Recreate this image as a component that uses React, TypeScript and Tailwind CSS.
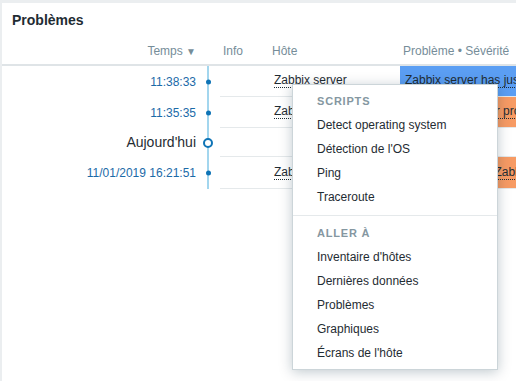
import React from 'react';

type Row = {
  time: string;
  today?: boolean;
  host?: string;
  problem?: string;
  color?: string;
  h: string;
};

const rows: Row[] = [
  { time: '11:38:33', host: 'Zabbix server', problem: 'Zabbix server has just been restarted', color: 'bg-[#5b9ef3]', h: 'h-[31px]' },
  { time: '11:35:35', host: 'Zabbix server', problem: 'Zabbix discoverer processes more than 75% busy', color: 'bg-[#f79b64]', h: 'h-[31px]' },
  { time: "Aujourd'hui", today: true, h: 'h-[29px]' },
  { time: '11/01/2019 16:21:51', host: 'Zabbix server', problem: 'Zabbix agent on Zabbix server is unreachable for 5 minutes', color: 'bg-[#f79b64]', h: 'h-[32px]' },
];

const scripts = ['Detect operating system', "Détection de l'OS", 'Ping', 'Traceroute'];
const goTo = ["Inventaire d'hôtes", 'Dernières données', 'Problèmes', 'Graphiques', "Écrans de l'hôte"];

function MenuSection({ title, items, pad }: { title: string; items: string[]; pad: string }) {
  return (
    <div className={pad}>
      <div className="h-6 flex items-center pl-[24px] text-[11px] font-bold tracking-[0.8px] text-[#8597a1]">{title}</div>
      {items.map((it) => (
        <div key={it} className="h-6 flex items-center pl-[24px] text-[12px] text-[#1f2c33]">
          {it}
        </div>
      ))}
    </div>
  );
}

export default function App() {
  return (
    <div
      className="w-[516px] h-[381px] overflow-hidden bg-[#ebeef0] pl-[2px] pt-[3px] relative"
      style={{ fontFamily: '"Liberation Sans", Arial, sans-serif' }}
    >
      <div className="bg-white h-full w-[600px]">
        <div className="h-[35px] flex items-center pl-[10px] text-[14px] font-bold text-[#1f2c33]">Problèmes</div>

        {/* header */}
        <div className="flex h-[28px] items-center border-b-2 border-[#dfe4e7] text-[12px] text-[#768d99]">
          <div className="w-[194px] shrink-0 text-right">
            Temps <span className="text-[10px]">▼</span>
          </div>
          <div className="w-[22px] shrink-0" />
          <div className="w-[49px] shrink-0 pl-[5px]">Info</div>
          <div className="w-[131px] shrink-0 pl-[5px]">Hôte</div>
          <div className="pl-[5px] whitespace-nowrap">Problème • Sévérité</div>
        </div>

        {rows.map((r, i) => (
          <div key={i} className={`flex ${r.h} text-[12px]`}>
            <div
              className={`w-[194px] shrink-0 flex items-center justify-end whitespace-nowrap ${
                r.today ? 'text-[14px] text-[#1f2c33]' : 'text-[#1b6aa8]'
              }`}
            >
              {r.time}
            </div>
            <div className="w-[24px] shrink-0 relative flex justify-center">
              <div className="w-[2px] h-full bg-[#a3d6ee]" />
              {r.today ? (
                <div className="absolute left-[7px] top-1/2 -translate-y-1/2 w-[10px] h-[10px] rounded-full border-2 border-[#0f74b6] bg-white" />
              ) : (
                <div className="absolute left-[10px] top-1/2 -translate-y-1/2 w-[5px] h-[5px] rounded-full bg-[#0f74b6]" />
              )}
            </div>
            <div className="flex flex-1 min-w-0 border-b border-[#e5e9eb]">
              <div className="w-[49px] shrink-0" />
              <div className="w-[131px] shrink-0 flex items-center pl-[5px] text-[#1f2c33] whitespace-nowrap">
                {r.host && <span className="border-b border-dotted border-[#1f2c33] leading-[13px]">{r.host}</span>}
              </div>
              <div className={`flex-1 min-w-0 overflow-hidden flex items-center pl-[5px] whitespace-nowrap ${r.color ?? ''}`}>
                {r.problem && (
                  <span className="border-b border-dotted border-[#1f2c33] leading-[13px] text-[#1f2c33]">{r.problem}</span>
                )}
              </div>
            </div>
          </div>
        ))}
      </div>

      {/* context menu */}
      <div className="absolute left-[292px] top-[84px] w-[206px] h-[286px] bg-white border border-[#ccd5d9] shadow-[0_2px_12px_rgba(0,40,60,0.25)]">
        <MenuSection title="SCRIPTS" items={scripts} pad="pt-[4px] pb-[6px]" />
        <div className="h-px bg-[#e5e9eb]" />
        <MenuSection title="ALLER À" items={goTo} pad="pt-[5px]" />
      </div>
    </div>
  );
}
